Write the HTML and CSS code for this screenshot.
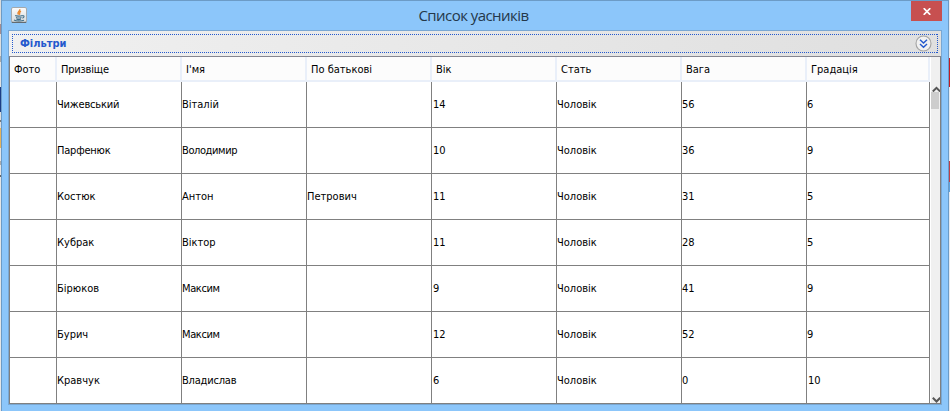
FILE: index.html
```
<!DOCTYPE html>
<html lang="uk">
<head>
<meta charset="utf-8">
<title>Список уасників</title>
<link rel="stylesheet" href="styles.css">
</head>
<body>
<div class="desktop">
<div class="edge edge-left"></div>
<main class="window">
  <header class="titlebar">
    <svg class="app-icon" viewBox="0 0 16 16">
      <defs><linearGradient id="ig" x1="0" y1="0" x2="0" y2="1"><stop offset="0" stop-color="#fcfcfc"/><stop offset="1" stop-color="#d5dadd"/></linearGradient></defs>
      <rect x=".5" y=".5" width="15" height="15" rx="1.5" fill="url(#ig)" stroke="#a3a9ad"/>
      <path d="M.8 15.4h14.4" stroke="#626a70" stroke-width="1.2"/>
      <path d="M8.7 2.2C9.5 4.4 5.5 4.6 7.5 7.6M10 4.2C7.5 5.4 9.5 6 8.2 7.7" fill="none" stroke="#e8872f" stroke-width="1.4"/>
      <path d="M4.2 8.5c1 .8 5.5.8 7.2 0M5 10.4c1.4.7 4 .7 5.5 0M5.4 12c1.2.6 3.4.6 4.6 0M11.2 8.8c2.5-.6 2.3 1.7.2 2.3M3 13c2 1.3 7.5 1.2 10 .2" fill="none" stroke="#416f8a" stroke-width="1.1"/>
    </svg>
    <h1 class="title">Список уасників</h1>
    <div class="close"><svg width="8" height="7" viewBox="0 0 8 7"><path d="M.7.2l6.6 6.6M7.3.2L.7 6.8" stroke="#fff" stroke-width="1.7"/></svg></div>
  </header>
  <section class="client">
    <div class="filter"><div class="filter-focus">
      <span class="filter-label">Фільтри</span>
      <svg class="expand" width="17" height="17" viewBox="0 0 17 17"><circle cx="8.5" cy="8.5" r="7.5" fill="#f1f1f1" stroke="#a3a3a3" stroke-width="1.1"/><path d="M5 4.7l3.5 3.3L12 4.7M5 8.9l3.5 3.3L12 8.9" fill="none" stroke="#2459cd" stroke-width="1.4"/></svg>
    </div></div>
    <div class="table">
      <div class="grid">
        <div class="row head"><span>Фото</span><span class="tight">Призвіще</span><span>І'мя</span><span>По батькові</span><span>Вік</span><span>Стать</span><span>Вага</span><span>Градація</span></div>
        <div class="row"><span></span><span class="tight">Чижевський</span><span>Віталій</span><span></span><span class="num">14</span><span>Чоловік</span><span>56</span><span>6</span></div>
        <div class="row"><span></span><span class="tight">Парфенюк</span><span class="tighter">Володимир</span><span></span><span class="num">10</span><span>Чоловік</span><span>36</span><span>9</span></div>
        <div class="row"><span></span><span>Костюк</span><span>Антон</span><span>Петрович</span><span class="num">11</span><span>Чоловік</span><span>31</span><span>5</span></div>
        <div class="row"><span></span><span>Кубрак</span><span>Віктор</span><span></span><span class="num">11</span><span>Чоловік</span><span>28</span><span>5</span></div>
        <div class="row"><span></span><span>Бірюков</span><span class="tighter">Максим</span><span></span><span class="num">9</span><span>Чоловік</span><span>41</span><span>9</span></div>
        <div class="row"><span></span><span>Бурич</span><span class="tighter">Максим</span><span></span><span class="num">12</span><span>Чоловік</span><span>52</span><span>9</span></div>
        <div class="row"><span></span><span>Кравчук</span><span class="tight">Владислав</span><span></span><span class="num">6</span><span>Чоловік</span><span>0</span><span class="num">10</span></div>
      </div>
      <div class="scroll">
        <svg class="up" width="9" height="6" viewBox="0 0 9 6"><path d="M1.8 5.5L5.5 1.8 9.2 5.5" fill="none" stroke="#565656" stroke-width="2"/></svg>
        <div class="thumb"></div>
        <svg class="down" width="9" height="6" viewBox="0 0 9 6"><path d="M1.8.8L5.5 4.5 9.2.8" fill="none" stroke="#565656" stroke-width="2"/></svg>
      </div>
    </div>
  </section>
</main>
<div class="edge edge-right"></div>
</div>
</body>
</html>
```

FILE: styles.css
```
* { box-sizing: border-box; }
body { margin: 0; background: #e9e9e9; overflow: hidden; }
.desktop { display: flex; width: 950px; height: 411px; }
.edge { width: 1px; flex: none; }
.edge-left { background: linear-gradient(#dcdcdc 0 24px, #a48c90 24px 34px, #dedede 34px 56px, #aaa 56px 62px, #e2e2e2 62px 87px, #1b3d86 87px 112px, #ddd 112px 120px, #777 120px 122px, #ddd 122px 128px, #e4b35d 128px 148px, #e5e5e5 148px 161px, #aaa 161px 165px, #e5e5e5 165px 175px, #666 175px 177px, #e6e6e6 177px); }
.edge-right { background: linear-gradient(#e9edf3 0 58px, #c11c25 58px 87px, #e6eaf0 87px 161px, #bd4048 161px 182px, #5da2dc 182px 192px, #e6eaf0 192px); }
.window {
  width: 948px; height: 411px; flex: none;
  padding: 0 6px 6px 6px;
  background: #8cc6fa;
  border: 1px solid #6c9bc6; border-bottom: 0;
}
.titlebar { height: 29px; display: flex; align-items: flex-start; }
.app-icon { width: 16px; height: 16px; margin: 6px 0 0 3px; flex: none; }
.title {
  flex: 1; margin: 3px 0 0; padding-left: 9px; text-align: center;
  font: 400 15px/22px "Open Sans", "Noto Sans", sans-serif;
  letter-spacing: -.55px; color: #24384a;
}
.close { width: 31px; height: 20px; background: #c75050; display: flex; align-items: center; justify-content: center; }
.client {
  height: 375px;
  border: 1px solid #79a7d3;
  background: #fff;
}
.filter { height: 25px; padding: 3px; background: linear-gradient(90deg, #f0f0f0, #dfdfdf); }
.filter-focus {
  height: 19px; display: flex; align-items: center; justify-content: space-between; padding: 0 6px 0 8px;
  background:
    repeating-linear-gradient(90deg, #2459cd 0 1px, transparent 1px 2px) 0 0 / 100% 1px no-repeat,
    repeating-linear-gradient(90deg, #2459cd 0 1px, transparent 1px 2px) 0 100% / 100% 1px no-repeat,
    repeating-linear-gradient(#2459cd 0 1px, transparent 1px 2px) 0 0 / 1px 100% no-repeat,
    repeating-linear-gradient(#2459cd 0 1px, transparent 1px 2px) 100% 0 / 1px 100% no-repeat;
}
.filter-label { font: 700 11px/17px "DejaVu Sans Condensed", "DejaVu Sans", sans-serif; color: #2459cd; }
.expand { flex: none; }
.table {
  height: 348px; display: flex; background: #fff;
  border: 1px solid #808080; border-top-color: #85858f;
}
.grid { width: 920px; flex: none; }
.row {
  display: grid; grid-template: 100% / 47px repeat(6, 125px) 123px;
  height: 46px;
  font: 11px/45px "DejaVu Sans Condensed", "DejaVu Sans", sans-serif;
  color: #000;
}
.row span { border-right: 1px solid #808080; border-bottom: 1px solid #808080; white-space: nowrap; }
.row:last-child span { border-bottom: 0; }
.row .num { padding-left: 1px; }
.row .tight { letter-spacing: -.2px; }
.row .tighter { letter-spacing: -.4px; }
.head { height: 25px; line-height: 26px; background: #fcfcfc; }
.row.head span { padding-left: 4px; border-right: 2px solid #e9eff9; border-bottom: 2px solid #e9eff9; }
.scroll { flex: 1; margin-left: 1px; background: #f0f0f0; display: flex; flex-direction: column; }
.up { margin: 29px 0 0 0; flex: none; }
.thumb { height: 17px; width: 8px; background: #cdcdcd; }
.down { margin-top: auto; flex: none; }
```
